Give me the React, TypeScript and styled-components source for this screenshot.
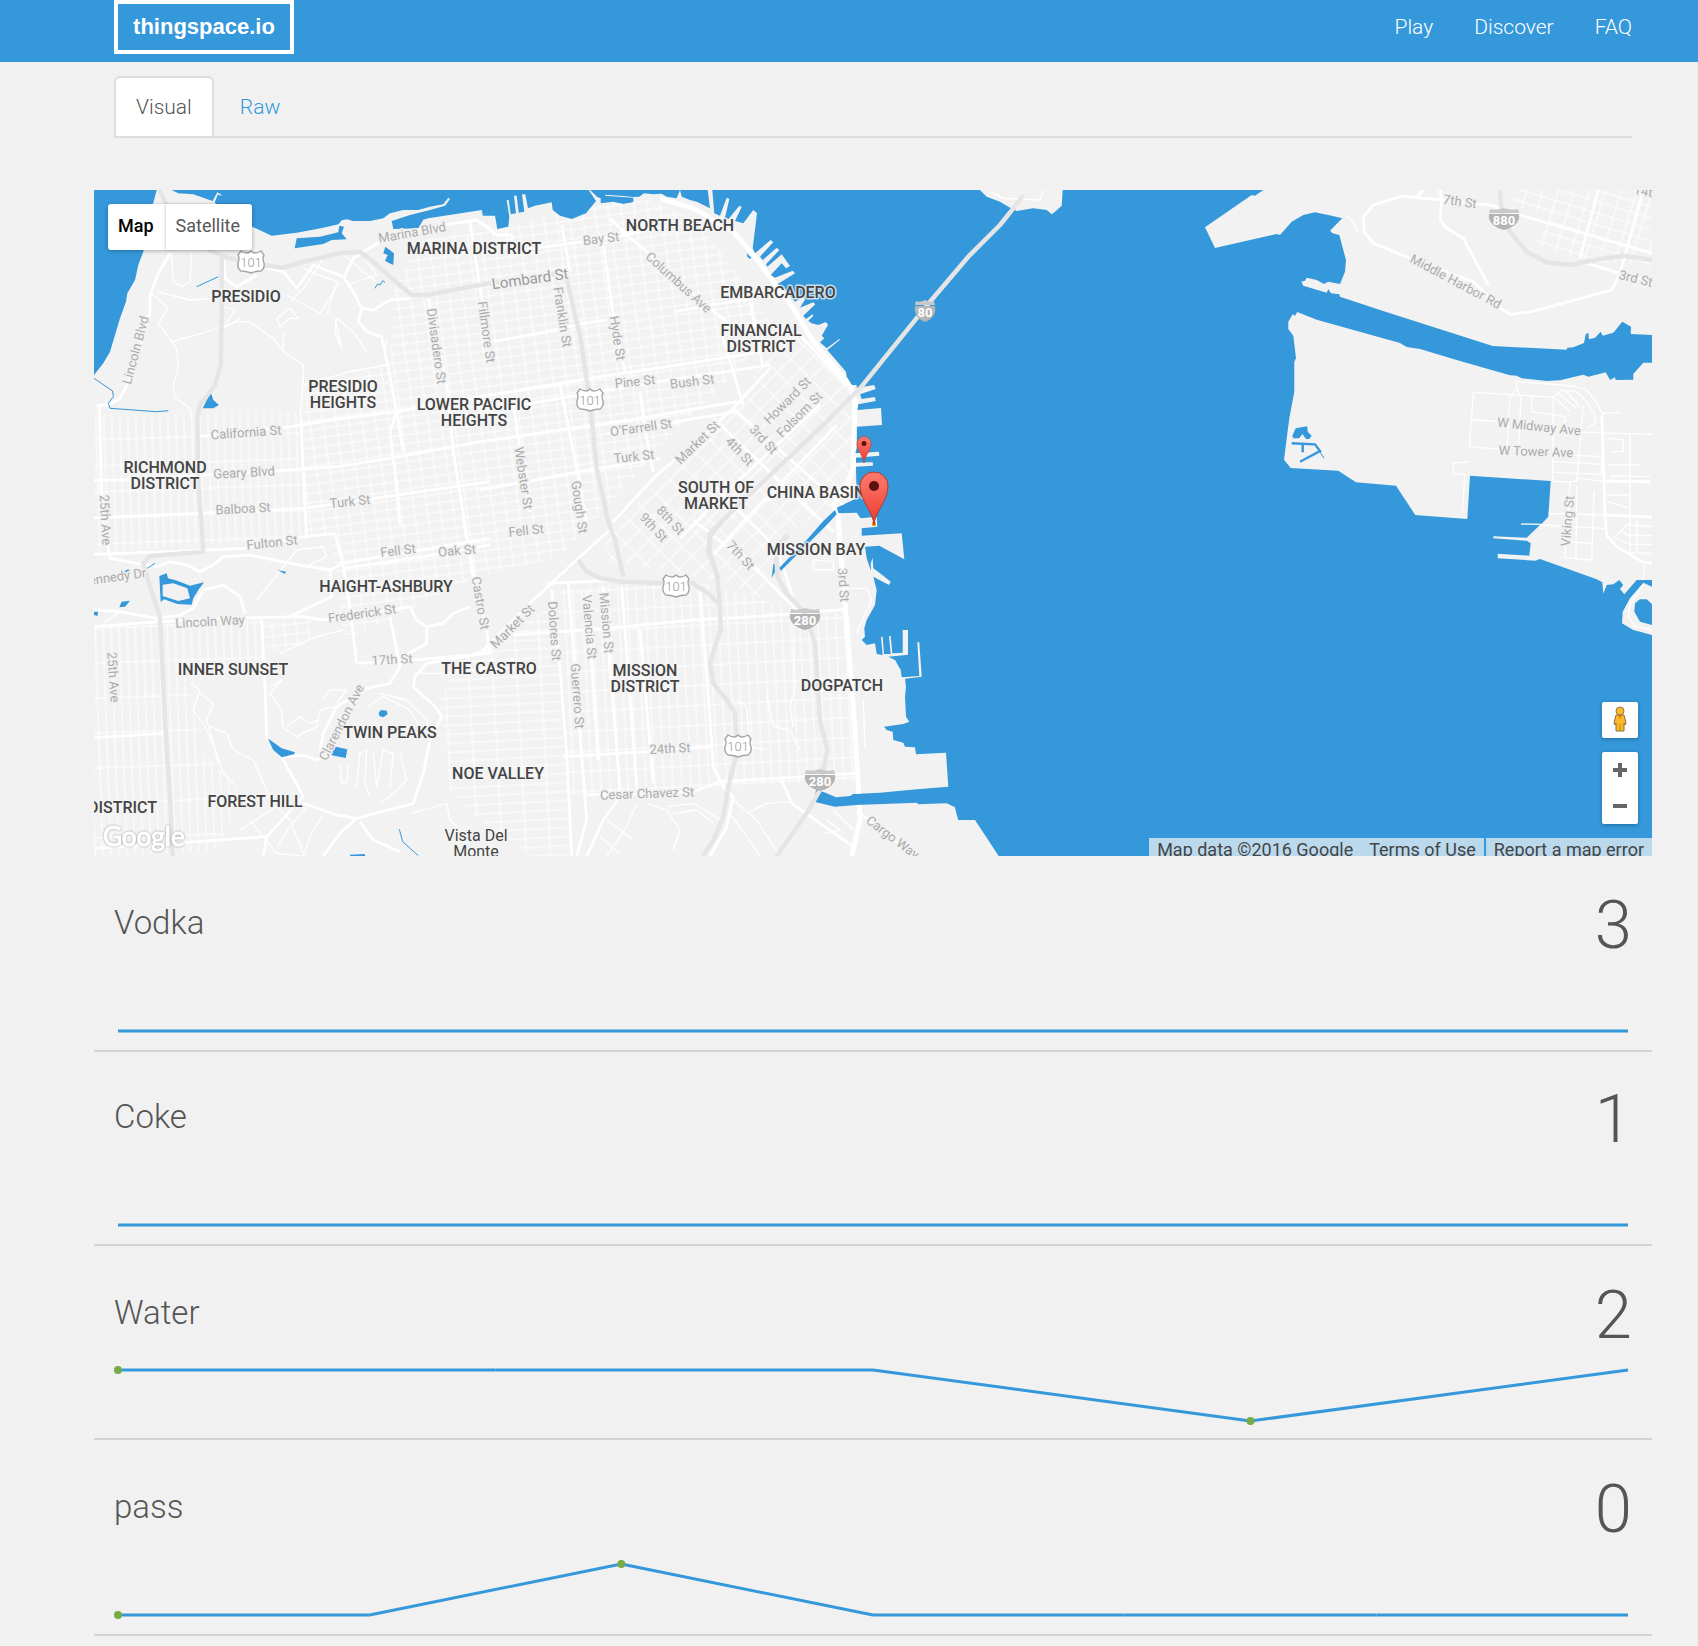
import React, { useState } from "react";
import styled, { createGlobalStyle, css } from "styled-components";

const BLUE = "#3498db";
const LAND = "#f2f2f2";
const SANS = 'Roboto, "Noto Sans", sans-serif';

const GlobalStyle = createGlobalStyle`
  * { box-sizing: border-box; }
  body { margin: 0; background: #f1f1f1; color: #555; font-family: ${SANS}; font-weight: 300; font-size: 21px; }
`;

/* ---------- page frame ---------- */

const Header = styled.header`
  display: flex;
  align-items: flex-start;
  justify-content: space-between;
  height: 62px;
  padding: 0 66px 0 114px;
  background: ${BLUE};
`;

const Brand = styled.a`
  display: flex;
  align-items: center;
  justify-content: center;
  width: 180px;
  height: 54px;
  border: 4px solid #fff;
  color: #fff;
  font: bold 22px "Liberation Sans", Arial, sans-serif;
  text-decoration: none;
`;

const Nav = styled.nav`
  display: flex;
  gap: 41px;
`;

const NavLink = styled.a`
  color: #fff;
  line-height: 54px;
  text-decoration: none;
`;

const Main = styled.main`
  padding: 14px 46px 0 94px;
`;

const Tabs = styled.div`
  display: flex;
  gap: 4px;
  margin: 0 20px 52px;
  border-bottom: 2px solid #ddd;
`;

const Tab = styled.button<{ $active: boolean }>`
  height: 62px;
  margin-bottom: -2px;
  padding: 0 20px;
  border: 2px solid transparent;
  border-radius: 6px 6px 0 0;
  background: none;
  color: ${BLUE};
  font: inherit;
  line-height: 30px;
  cursor: pointer;
  ${(p) =>
    p.$active &&
    css`
      background: #fff;
      border-color: #ddd;
      color: #555;
    `}
`;

/* ---------- map ---------- */

const MapFrame = styled.section`
  position: relative;
  height: 666px;
  overflow: hidden;
  background: ${BLUE};
`;

const MapCanvas = styled.svg`
  display: block;
  width: 100%;
  height: 100%;
  font-family: ${SANS};
`;

const District = styled.text<{ $soft?: boolean }>`
  font-size: 16px;
  font-weight: ${(p) => (p.$soft ? 400 : 500)};
  fill: #444;
  stroke: #f5f5f5;
  stroke-width: 3px;
  stroke-opacity: 0.75;
  stroke-linejoin: round;
  paint-order: stroke;
`;

const Street = styled.text<{ $major?: boolean }>`
  font-size: ${(p) => (p.$major ? 15 : 13)}px;
  font-weight: 400;
  fill: ${(p) => (p.$major ? "#9a9a9a" : "#acacac")};
  stroke: ${LAND};
  stroke-width: 3px;
  stroke-linejoin: round;
  paint-order: stroke;
`;

const ShieldText = styled.text`
  font-size: 13px;
  text-anchor: middle;
`;

const Watermark = styled.text`
  font: 400 26px Lato, sans-serif;
  fill: #fff;
  stroke: #fff;
  stroke-width: 1px;
  filter: drop-shadow(0 0 1px #999);
`;

const TypeSwitch = styled.div`
  position: absolute;
  top: 14px;
  left: 14px;
  display: flex;
  height: 46px;
  border-radius: 3px;
  background: #fff;
  box-shadow: 0 1px 4px rgba(0, 0, 0, 0.3);
`;

const TypeButton = styled.button<{ $active: boolean }>`
  padding: 0 12px 3px 10px;
  border: 0;
  background: none;
  color: ${(p) => (p.$active ? "#000" : "#565656")};
  font: ${(p) => (p.$active ? 500 : 400)} 18px ${SANS};
  cursor: pointer;
  & + & { box-shadow: -1px 0 2px rgba(0, 0, 0, 0.15); }
`;

const SideControls = styled.div`
  position: absolute;
  right: 14px;
  bottom: 32px;
  display: flex;
  flex-direction: column;
  gap: 14px;
`;

const ControlGroup = styled.div`
  display: flex;
  flex-direction: column;
  border-radius: 2px;
  background: #fff;
  box-shadow: 0 1px 4px rgba(0, 0, 0, 0.3);
`;

const ControlButton = styled.button`
  display: grid;
  place-items: center;
  width: 36px;
  height: 36px;
  padding: 0;
  border: 0;
  background: none;
  cursor: pointer;
`;

const Attribution = styled.div`
  position: absolute;
  right: 0;
  bottom: 0;
  display: flex;
  gap: 2px;
  height: 18px;
  overflow: hidden;
`;

const AttributionItem = styled.div`
  display: flex;
  gap: 16px;
  padding: 0 8px;
  background: rgba(245, 245, 245, 0.7);
  color: #444;
  font-size: 18px;
  font-weight: 400;
  line-height: 24px;
  white-space: nowrap;
  a { color: inherit; text-decoration: none; }
`;

type Pt = [number, number];

/* Survey sheets: each is drawn at three units per map unit from its own origin. */
const sheet = (ox: number, oy: number) => (list: string): Pt[] =>
  list
    .trim()
    .split(/\s+/)
    .map((p) => {
      const [x, y] = p.split(",").map(Number);
      return [Math.round((ox + x / 3) * 10) / 10, Math.round((oy + y / 3) * 10) / 10];
    });

const NW = sheet(90, 185);
const N = sheet(480, 185);
const NE = sheet(680, 185);
const SW = sheet(90, 520);
const S = sheet(480, 520);
const E = sheet(1140, 185);
const str = (p: Pt[]) => p.map((q) => q.join(",")).join(" ");

const city = [
  ...NW("12,570 40,535 60,500 75,450 90,400 108,350 112,325 135,285 145,240 160,200 175,130 188,60 200,15 245,15 265,25 310,28 350,42 368,48 382,22 395,30 390,32 384,28 374,52 400,85 440,110 487,125 545,152 620,143 700,128 745,118 755,106 770,103 790,108 840,108 880,100 900,85 940,75 985,75 1020,65 1060,58 1075,38 1080,42 1065,62 1020,75 960,90 905,108 910,132 985,130 1000,104 1015,100 1175,75 1180,94"),
  ...N("0,75 8,92 45,92 52,132 85,125 88,95 80,45 86,45 92,88 108,85 102,32 110,32 116,83 133,80 126,28 136,28 144,70 165,62 215,52 218,75 240,92 275,102 318,85 348,48 326,15 330,15 352,36 362,40 362,55 400,50 430,57 460,52 460,38 425,36 375,32 376,29 420,32 460,36 478,35 492,25 520,28 545,26 560,35 590,40 600,15 605,35 630,45 650,50 690,70 683,15 697,15 703,85 720,92 740,38 748,42 735,98 745,103 778,62 785,66 765,108 790,115 820,75"),
  ...NE("231,85 218,190 225,205 272,165 280,172 240,215 248,225 290,188 298,195 258,238 262,245 305,208 330,243 318,250 305,235 272,270 285,278 338,257 345,265 292,298 312,310 340,345 345,350 370,335 376,342 360,368 400,352 406,358 370,392 378,402 398,388 400,392 385,408 395,415 415,420 438,411 444,420 425,452 433,460 420,472 440,490 478,462 480,464 442,495 498,560 500,575 515,600 530,600 530,608 583,600 587,612 540,628 545,642 585,636 587,648 535,658 532,675 603,669 606,720 530,725 530,790 525,805 597,800 598,812 528,818 528,833 578,832 579,842 528,845 530,940 470,968 475,985 530,983 542,1000 590,995 592,1025 545,1030 545,1052 665,1045 673,1123 598,1082 555,1085 560,1120 573,1158 572,1135 578,1118 580,1150 600,1165 632,1190 627,1200 580,1175 590,1215 585,1260 560,1305 553,1330 555,1355"),
  ...S("1145,360 1160,375 1185,370 1190,402 1208,405 1203,350 1208,350 1212,402 1232,402 1227,348 1232,348 1237,400 1268,398 1268,330 1284,330 1284,404 1225,410 1245,420 1262,450 1265,472 1318,468 1312,367 1318,367 1325,470 1275,476 1278,500 1275,530 1278,590 1288,605 1270,612 1212,620 1220,630 1238,635 1240,660 1270,668 1275,680 1305,682 1308,703 1398,698 1405,800 1310,808 1200,818 1120,822 1110,828 1068,832 1040,820 1020,812 1008,810 1002,845 1065,860 1130,855 1310,848 1315,853 1400,850 1425,862 1428,876 1435,900 1485,900 1556,1008"),
  [94, 856] as Pt,
];

const land: Pt[][] = [
  city,
  NE("900,15 920,35 960,50 985,65 1010,78 1060,70 1100,75 1115,88 1125,80 1145,62 1148,15"),
  E("370,15 345,32 335,30 195,127 225,189 410,147 420,150 455,110 490,90 525,82 575,92 607,100 570,137 578,145 598,150 618,225 615,260 600,297 565,290 552,297 530,285 500,278 495,287 484,290 490,302 560,323 565,312 573,325 598,328 600,335 720,375 1058,483 1280,494 1282,488 1300,487 1332,474 1337,448 1345,443 1347,463 1365,458 1382,440 1388,452 1420,443 1447,410 1473,425 1472,447 1536,450 1536,15"),
  E("472,381 530,404 780,474 800,486 840,492 960,528 1110,571 1130,572 1145,580 1220,588 1260,586 1330,569 1345,575 1375,568 1397,562 1410,585 1425,577 1427,585 1480,584 1480,567 1510,533 1536,533 1536,1185 1490,1185 1453,1228 1440,1212 1450,1200 1438,1185 1420,1198 1400,1200 1390,1226 1387,1192 1370,1183 1200,1122 1185,1127 1073,1120 1073,1106 1168,1112 1172,1075 1160,1067 1060,1060 1060,1054 1160,1058 1200,1020 1143,1019 1143,1015 1205,1016 1225,995 1232,888 990,872 982,1002 826,990 768,902 648,892 595,857 452,849 432,824 448,700 463,620 463,530 468,520 460,452 445,432 445,410 458,388 465,392"),
  E("1510,1193 1470,1240 1448,1280 1446,1315 1480,1335 1536,1350 1536,1320 1500,1310 1483,1280 1485,1255 1500,1243 1520,1243 1536,1258 1536,1205"),
];

const ponds: Pt[][] = [
  NW("620,160 690,155 745,142 748,122 762,125 755,145 770,163 725,165 700,177 614,190"),
  NW("338,670 362,622 370,645 387,660 370,670"),
  NW("886,185 912,205 910,240 885,228 893,210 880,205"),
  NE("465,975 470,988 435,1025 380,1080 302,1158 298,1148 380,1065 430,1008"),
  NE("275,1178 280,1138 288,1134 288,1155"),
  NE("200,205 214,218 210,222 202,215"),
  SW("88,262 95,245 120,242 105,260"),
  SW("90,160 115,148 122,158 105,170"),
  SW("12,275 25,275 22,288 12,285"),
  SW("563,150 588,155 585,162"),
  SW("533,655 575,685 615,697 612,703 575,712 550,690"),
  SW("727,678 772,688 767,714 722,705"),
  SW("866,578 873,570 890,572 893,582 880,592 868,588"),
  SW("780,1004 825,1002 825,1008 780,1008"),
  E("457,752 467,730 502,724 503,740 515,752 508,762 498,762 487,747 478,760 460,760"),
];

const creeks: Pt[][] = [
  NW("320,305 385,275"),
  NW("12,580 68,618 70,635 55,655 60,670 200,680 235,677"),
  NW("855,310 862,298 870,300 878,287 885,292"),
  SW("172,145 195,130"),
  SW("928,928 938,965 985,1007"),
  E("525,778 552,820"),
];

const docks: Pt[][] = [E("455,775 525,778 540,798 480,830"), E("488,780 488,802")];

const freeways: Pt[][] = [
  [...NW("208,15 230,60 300,160 370,200 400,215 520,240 580,248 640,230 750,205 810,200 850,230 900,275 965,330 1010,330 1200,295"), ...N("255,263 300,450 330,650 350,850 385,1010"), ...S("405,60 430,170")],
  [...NW("395,215 395,400 392,540 375,600 330,660 322,700 325,900 335,1020"), ...SW("340,95 180,108 160,130 180,200 210,290 225,600 240,830 248,1008")],
  S("295,120 320,155 360,175 430,185 550,190 640,190 690,225 715,250"),
  S("730,0 690,50 690,100 710,160 718,230 722,330 705,380 690,430 700,490 740,540 765,580 770,700 745,800 730,890 700,960 670,1008"),
  NE("1030,30 1000,70 960,120 865,215 750,350 540,610 430,720 160,975 90,1045 85,1100 115,1180"),
  S("925,45 888,80 892,170 920,220 975,280 1005,370 1020,600 1042,690 1020,810 980,880 890,1008"),
  E("1080,15 1085,80 1110,140 1160,200 1220,232 1290,240 1380,222 1450,212 1536,225"),
];

const avenues: Pt[][] = [
  NW("240,205 205,265 180,330 180,380 130,560 90,640 55,660 20,662"),
  NW("28,665 35,930 42,1035"),
  [...NW("12,886 100,885 350,870 560,858 740,845 900,820 1170,770"), ...N("240,735 480,700 770,650")],
  NW("330,755 600,725 760,700 920,680 1200,630"),
  NW("12,998 220,990 640,970 850,940 1200,890"),
  NW("633,700 640,870 650,1060"),
  NW("580,260 620,310 670,240 760,275 790,320 815,370 805,410 830,440 875,455 895,550 920,680 940,800"),
  NW("760,280 790,220 870,170 1000,130 1160,105 1200,130"),
  NW("815,370 850,375 900,345 960,340"),
  NW("400,215 405,280 440,305 500,270"),
  NW("530,250 580,260"),
  NW("1015,340 1070,600 1090,800 1125,1020 1150,1180"),
  NW("1140,110 1170,310 1200,480"),
  NW("920,680 900,740 915,860 930,1020"),
  N("0,112 50,150 95,150 100,190"),
  N("100,198 310,170 430,150 560,125"),
  N("245,120 270,260"),
  N("370,180 400,390 435,560"),
  N("480,620 500,760 520,860"),
  N("100,660 150,980"),
  N("240,600 290,850 320,1020"),
  N("390,100 440,150 500,200 690,370 740,410"),
  N("40,470 200,440 310,415 380,405"),
  N("585,380 700,358 830,340"),
  N("0,635 300,585 560,545 850,500"),
  N("0,680 240,640 600,580 870,540"),
  N("0,915 300,860 540,820"),
  N("380,745 770,680"),
  N("870,550 760,670 650,770 530,870 400,1010"),
  N("760,670 960,850 1090,960"),
  N("700,700 900,890 1060,1040"),
  N("720,430 790,660"),
  N("810,350 850,550"),
  N("950,440 1100,600"),
  NE("470,720 200,1000 100,1110"),
  NE("420,660 150,910 0,1060"),
  NE("100,900 290,1090 340,1240"),
  SW("45,30 60,115 140,130 200,140 240,125 290,135 330,155 370,135 400,110 480,105 600,130 720,150 725,230 640,270 600,290"),
  SW("12,103 180,97 460,85 640,50 735,40"),
  SW("735,40 760,135 780,260 800,430"),
  SW("720,150 760,130 900,105 1200,55"),
  SW("760,145 1000,110 1200,75"),
  SW("12,320 210,305 480,293 640,290 700,300 960,260"),
  SW("12,270 90,275 200,295 270,285 310,265 340,210 400,195 450,230 465,280"),
  SW("515,300 525,500 530,650 575,710 640,830 530,950 520,1008"),
  SW("575,712 640,705 680,720 725,705"),
  SW("640,850 740,885 800,895 970,850 1000,760 1020,660 1055,590 1040,565 970,500 975,470 1010,430 1150,405 1190,390"),
  SW("800,895 750,940 700,1008"),
  SW("810,905 850,960 930,995"),
  SW("690,700 700,640 740,560 830,505 900,490 930,440 900,290"),
  SW("960,260 980,300 1010,320 1010,370 940,410"),
  SW("1015,320 1060,310 1090,280 1140,260"),
  SW("800,430 970,420 1200,400"),
  SW("12,653 220,640"),
  SW("12,985 250,970 530,950"),
  SW("1120,0 1150,160 1190,330 1200,400"),
  S("0,400 160,240 300,110 400,20"),
  S("100,345 380,325 640,300 820,290 1095,268"),
  S("215,210 240,450 260,700 275,1008"),
  S("265,190 300,640 320,900 290,1008"),
  S("320,215 355,720"),
  S("370,200 400,560 420,810"),
  S("425,200 470,800"),
  S("480,330 520,790"),
  S("660,200 690,600 700,740 730,800 760,830 740,920 690,1008"),
  S("200,190 420,180"),
  S("250,710 500,695 690,680"),
  S("310,825 640,815 720,785 1130,760"),
  S("640,0 830,150 960,280"),
  S("905,780 935,850 1120,980"),
  S("1140,880 1180,910 1300,1008"),
  S("420,830 370,900 320,1008"),
  E("850,15 830,35"),
  E("905,45 785,33 700,60 670,95 672,140 700,175 810,220 1000,290 1085,372 1110,388 1175,380 1415,315 1440,265 1510,15"),
  E("900,15 905,45 900,105 920,130 970,160 1045,300"),
  E("905,45 1060,62 1140,90 1536,205"),
  E("1320,220 1375,15"),
  E("1340,235 1440,265 1536,290"),
  E("1390,888 1530,890"),
  E("1385,690 1392,880 1395,990 1400,1050 1430,1085 1510,1132 1536,1134"),
  E("1395,990 1536,996"),
];

const embarcadero: Pt[] = [
  ...N("540,40 640,70 760,140 820,210 940,370 1000,470 1110,600 1125,650 1120,850 1100,900 1060,960 1075,990"),
  ...S("1075,0 1095,250 1120,560 1135,800 1140,900 1115,1008"),
];

const lanes: Pt[][] = [
  NW("245,205 250,290 275,305 300,290 305,205"),
  NW("185,325 235,370 205,415 245,470 260,490 265,545 250,600 255,640 300,670 305,700"),
  NW("245,470 320,450 440,410 480,410 520,440 550,460 580,500 640,540 640,600"),
  NW("200,320 300,345 380,340"),
  NW("385,360 435,375 400,430 450,400"),
  NW("560,400 600,370 625,400 600,400 570,425 560,400"),
  NW("580,445 580,500"),
  NW("590,330 690,385 750,290"),
  NW("640,250 740,290 710,390"),
  NW("735,400 755,490 735,440 740,400 790,440 830,500"),
  NW("640,600 780,560 890,540"),
  NW("890,460 885,510"),
  NW("760,210 820,260 860,290"),
  NW("700,220 640,310 600,350"),
  NW("770,300 860,270 830,230"),
  NW("640,580 630,700"),
  SW("540,500 575,480 540,520 575,570 580,625 620,650 680,620 690,570 740,560"),
  SW("590,620 630,590 660,610 685,600"),
  SW("300,490 330,510 310,570 345,620 380,700 400,760 430,790"),
  SW("360,620 410,640 430,690 490,720 520,790 550,850"),
  SW("330,520 370,550 350,600 365,650 385,730"),
  SW("700,540 720,510 770,510 740,550"),
  SW("830,560 880,530 960,570 1000,640"),
  SW("870,520 950,540 1010,600 1020,650"),
  SW("800,800 810,700 830,690 825,790 840,830"),
  SW("850,700 860,800 880,690 910,700 900,800"),
  SW("750,730 755,790 770,790 775,730"),
  SW("930,700 950,780 900,830 870,850"),
  SW("570,400 680,350 760,330"),
  SW("500,240 620,90 700,80 710,110 650,140"),
  SW("980,460 1100,460 1190,440"),
  SW("960,880 1000,870 1070,850 1080,900 1110,930"),
  SW("480,900 560,1000 640,1008"),
  SW("450,930 560,860 600,900 640,1000"),
  SW("650,860 600,920 560,980"),
  SW("700,880 660,950 640,1008"),
  SW("40,310 90,275"),
  S("560,860 640,850 690,880 720,900"),
  S("580,880 650,870 700,910"),
  S("470,850 440,920 380,1008"),
  S("500,850 560,870 600,930 580,990"),
  S("380,900 460,960"),
  S("360,950 420,1000"),
  S("760,840 830,900 900,1008"),
  S("800,880 860,850 930,845"),
  S("750,880 800,950 840,1008"),
  S("770,540 800,560 810,680 860,690"),
  S("860,520 880,620 930,630 960,690"),
  S("940,300 945,500 930,560 940,620"),
  S("1150,540 1155,680"),
  S("1000,120 1060,125 1060,150 1000,150 1000,120"),
  S("1095,205 1160,205 1175,240 1130,340"),
  S("1040,900 1080,930 1030,940"),
  S("1060,870 1120,930"),
  NE("930,20 970,40 1080,45 1090,15"),
  E("1130,590 1300,603 1340,615 1365,645 1390,690"),
  E("1445,683 1385,685"),
  E("1000,622 1240,637 1238,890"),
  E("1000,622 988,785 1090,793"),
  E("995,705 1090,710"),
  E("1130,590 1130,610 1110,635 1102,780"),
  E("1130,610 1143,640 1136,780"),
  E("1240,637 1265,615 1310,620 1345,655 1365,690 1365,715 1340,730"),
  E("1245,640 1290,680"),
  E("1255,625 1310,670"),
  E("1275,615 1320,665"),
  E("1330,660 1310,890"),
  E("1175,635 1175,680 1275,695 1275,720"),
  E("1270,740 1536,748"),
  E("1290,810 1385,815 1385,870"),
  E("1240,830 1385,838"),
  E("1240,862 1390,868"),
  E("1238,890 1300,890 1320,880 1392,890"),
  E("1290,890 1275,1118 1355,1125 1362,915"),
  E("1225,985 1395,990"),
  E("1200,1020 1395,1030"),
  E("1280,1070 1355,1075"),
  E("1310,900 1308,1120"),
  E("1405,760 1450,765 1450,800 1410,800"),
  E("1405,840 1500,840"),
  E("1410,873 1530,875"),
  E("1470,750 1470,1100"),
  E("1400,930 1470,930"),
  E("1400,950 1470,970"),
  E("1420,1060 1460,1020 1536,1024"),
  E("1445,1035 1460,1050 1536,1052"),
  E("1430,1060 1470,1078 1536,1078"),
  E("1465,1103 1536,1105"),
  E("1490,1000 1490,1100"),
  E("1512,1135 1510,1193"),
  E("1510,1200 1468,1262 1465,1295 1485,1325 1536,1335"),
  E("940,865 940,835 985,830"),
  E("940,865 975,868 967,985"),
  E("622,92 640,115 655,145"),
];

interface Grid {
  id: string;
  w: number;
  h: number;
  angle: number;
  area: string;
}

const grids: Grid[] = [
  { id: "richmond", w: 8, h: 26, angle: -2, area: "94,415 300,412 306,537 94,553" },
  { id: "pacific", w: 13, h: 9, angle: -8, area: "395,288 420,240 480,232 600,205 650,200 700,222 770,322 738,372 690,415 595,520 560,556 470,580 345,640 330,535 304,532 302,395 390,362" },
  { id: "soma", w: 19, h: 14, angle: -45, area: "790,325 850,385 852,470 830,505 780,540 760,600 720,580 690,575 600,560 610,530 735,405" },
  { id: "mission", w: 9, h: 20, angle: -3, area: "560,590 690,580 800,610 850,612 855,780 570,795" },
  { id: "castro", w: 24, h: 9, angle: -3, area: "460,660 560,600 570,856 530,856 480,820 450,790 440,700" },
  { id: "sunset", w: 8, h: 35, angle: -2, area: "94,628 262,619 264,660 190,685 200,750 240,790 220,850 94,856" },
  { id: "haight", w: 12, h: 10, angle: -6, area: "262,622 312,618 312,640 262,655" },
  { id: "oakland", w: 15, h: 11, angle: 17, area: "1515,190 1652,190 1652,265 1590,262 1535,245 1550,215 1510,205" },
];

interface Label {
  t: string;
  x: number;
  y: number;
  r?: number;
  end?: boolean;
  big?: boolean;
}

const streets: Label[] = [
  { t: "Marina Blvd", x: 412, y: 232, r: -10 },
  { t: "Lincoln Blvd", x: 135, y: 350, r: -75 },
  { t: "California St", x: 246, y: 432, r: -4 },
  { t: "Geary Blvd", x: 244, y: 472, r: -3 },
  { t: "Balboa St", x: 243, y: 508, r: -3 },
  { t: "Turk St", x: 350, y: 501, r: -6 },
  { t: "25th Ave", x: 106, y: 520, r: 87 },
  { t: "Divisadero St", x: 437, y: 346, r: 82 },
  { t: "Fillmore St", x: 487, y: 332, r: 82 },
  { t: "Lombard St", x: 530, y: 279, r: -8, big: true },
  { t: "Bay St", x: 601, y: 238, r: -7 },
  { t: "Columbus Ave", x: 679, y: 282, r: 42 },
  { t: "Franklin St", x: 563, y: 317, r: 81 },
  { t: "Hyde St", x: 618, y: 338, r: 81 },
  { t: "Pine St", x: 635, y: 381, r: -6 },
  { t: "Bush St", x: 692, y: 381, r: -7 },
  { t: "O'Farrell St", x: 641, y: 427, r: -8 },
  { t: "Turk St", x: 634, y: 456, r: -6 },
  { t: "Market St", x: 697, y: 442, r: -44 },
  { t: "4th St", x: 740, y: 451, r: 47 },
  { t: "3rd St", x: 764, y: 439, r: 47 },
  { t: "Howard St", x: 787, y: 400, r: -45 },
  { t: "Folsom St", x: 799, y: 414, r: -45 },
  { t: "Webster St", x: 524, y: 478, r: 81 },
  { t: "Gough St", x: 580, y: 507, r: 82 },
  { t: "8th St", x: 671, y: 520, r: 47 },
  { t: "9th St", x: 654, y: 527, r: 47 },
  { t: "7th St", x: 741, y: 555, r: 47 },
  { t: "Fulton St", x: 272, y: 542, r: -6 },
  { t: "Fell St", x: 398, y: 550, r: -7 },
  { t: "Fell St", x: 526, y: 530, r: -6 },
  { t: "Oak St", x: 457, y: 550, r: -5 },
  { t: "Kennedy Dr", x: 146, y: 572, r: -8, end: true },
  { t: "Lincoln Way", x: 210, y: 621, r: -3 },
  { t: "Frederick St", x: 362, y: 613, r: -8 },
  { t: "17th St", x: 392, y: 659, r: -3 },
  { t: "Castro St", x: 481, y: 603, r: 80 },
  { t: "Clarendon Ave", x: 341, y: 722, r: -63 },
  { t: "25th Ave", x: 114, y: 677, r: 86 },
  { t: "Market St", x: 512, y: 626, r: -45 },
  { t: "Dolores St", x: 555, y: 631, r: 86 },
  { t: "Valencia St", x: 590, y: 627, r: 85 },
  { t: "Mission St", x: 607, y: 623, r: 85 },
  { t: "Guerrero St", x: 578, y: 696, r: 86 },
  { t: "24th St", x: 670, y: 748, r: -3 },
  { t: "Cesar Chavez St", x: 647, y: 793, r: -2 },
  { t: "3rd St", x: 844, y: 585, r: 86 },
  { t: "Cargo Way", x: 893, y: 837, r: 37 },
  { t: "7th St", x: 1460, y: 201, r: 8 },
  { t: "Middle Harbor Rd", x: 1456, y: 281, r: 28 },
  { t: "3rd St", x: 1636, y: 278, r: 14 },
  { t: "14th", x: 1647, y: 191, r: 10 },
  { t: "W Midway Ave", x: 1539, y: 426, r: 6 },
  { t: "W Tower Ave", x: 1536, y: 451, r: 2 },
  { t: "Viking St", x: 1567, y: 521, r: -85 },
];

const districts: Label[] = [
  { t: "MARINA DISTRICT", x: 474, y: 248 },
  { t: "PRESIDIO", x: 246, y: 296 },
  { t: "NORTH BEACH", x: 680, y: 225 },
  { t: "EMBARCADERO", x: 778, y: 292 },
  { t: "FINANCIAL", x: 761, y: 330 },
  { t: "DISTRICT", x: 761, y: 346 },
  { t: "PRESIDIO", x: 343, y: 386 },
  { t: "HEIGHTS", x: 343, y: 402 },
  { t: "LOWER PACIFIC", x: 474, y: 404 },
  { t: "HEIGHTS", x: 474, y: 420 },
  { t: "RICHMOND", x: 165, y: 467 },
  { t: "DISTRICT", x: 165, y: 483 },
  { t: "SOUTH OF", x: 716, y: 487 },
  { t: "MARKET", x: 716, y: 503 },
  { t: "CHINA BASIN", x: 816, y: 492 },
  { t: "MISSION BAY", x: 816, y: 549 },
  { t: "HAIGHT-ASHBURY", x: 386, y: 586 },
  { t: "INNER SUNSET", x: 233, y: 669 },
  { t: "THE CASTRO", x: 489, y: 668 },
  { t: "MISSION", x: 645, y: 670 },
  { t: "DISTRICT", x: 645, y: 686 },
  { t: "DOGPATCH", x: 842, y: 685 },
  { t: "TWIN PEAKS", x: 390, y: 732 },
  { t: "NOE VALLEY", x: 498, y: 773 },
  { t: "FOREST HILL", x: 255, y: 801 },
  { t: "DISTRICT", x: 157, y: 807, end: true },
  { t: "Vista Del", x: 476, y: 835, big: true },
  { t: "Monte", x: 476, y: 851, big: true },
];

const UsShield = ({ x, y }: { x: number; y: number }) => (
  <g transform={`translate(${x} ${y})`}>
    <path
      d="M-10 -11 Q-7 -9 -4 -9 Q-2 -9 0 -11 Q2 -9 4 -9 Q7 -9 10 -11 L13 -7 Q11 -4 13 1 Q14 6 10 9 Q5 9 0 11 Q-5 9 -10 9 Q-14 6 -13 1 Q-11 -4 -13 -7 Z"
      fill="#fff"
      stroke="#a6a6a6"
      strokeWidth={1.4}
    />
    <ShieldText y={5} fill="#999">101</ShieldText>
  </g>
);

const Interstate = ({ x, y, n }: { x: number; y: number; n: string }) => {
  const w = n.length > 2 ? 15 : 10;
  return (
    <g transform={`translate(${x} ${y})`}>
      <path d={`M${-w + 1} -10 Q${-w / 2} -8 0 -11 Q${w / 2} -8 ${w - 1} -10 L${w} -6 H${-w}Z`} fill="#c9c9c9" />
      <path d={`M${-w} -5 H${w} Q${w + 2} 6 0 11 Q${-w - 2} 6 ${-w} -5Z`} fill="#b4b4b4" />
      <ShieldText y={6} fill="#fff" fontWeight={700}>{n}</ShieldText>
    </g>
  );
};

const Pin = ({ x, y, k = 1 }: { x: number; y: number; k?: number }) => (
  <g transform={`translate(${x} ${y}) scale(${k})`}>
    <path
      d="M0 0 C-1 -14 -14 -24 -14 -39 A14 14 0 0 1 14 -39 C14 -24 1 -14 0 0Z"
      fill="url(#pin)"
      stroke="#b23a30"
    />
    <circle cy={-39} r={5} fill="#5a120d" />
  </g>
);

const lineSet = (set: Pt[][]) => set.map((p, i) => <polyline key={i} points={str(p)} />);

const CityMap = () => (
  <MapCanvas viewBox="94 190 1558 666" preserveAspectRatio="xMidYMid slice" role="img" aria-label="Map of San Francisco">
    <defs>
      <linearGradient id="pin" x1="0" y1="0" x2="0" y2="1">
        <stop offset="0" stopColor="#ff7a6e" />
        <stop offset="1" stopColor="#ea3c2e" />
      </linearGradient>
      <clipPath id="shore">
        {land.map((p, i) => (
          <polygon key={i} points={str(p)} />
        ))}
      </clipPath>
      {grids.map((g) => (
        <pattern key={g.id} id={g.id} width={g.w} height={g.h} patternUnits="userSpaceOnUse" patternTransform={`rotate(${g.angle})`}>
          <path d={`M0 1H${g.w}M1 0V${g.h}`} stroke="#fff" fill="none" />
        </pattern>
      ))}
    </defs>
    <rect x={94} y={190} width={1558} height={666} fill={BLUE} />
    <g fill={LAND}>
      {land.map((p, i) => (
        <polygon key={i} points={str(p)} />
      ))}
    </g>
    <g clipPath="url(#shore)">
      {grids.map((g) => (
        <polygon key={g.id} points={g.area} fill={`url(#${g.id})`} />
      ))}
      <g fill="none" stroke="#fff" strokeLinejoin="round">
        <g strokeWidth={1.3}>{lineSet(lanes)}</g>
        <g strokeWidth={2.8}>{lineSet(avenues)}</g>
        <polyline points={str(embarcadero)} strokeWidth={5} />
      </g>
    </g>
    <g fill={BLUE}>
      {ponds.map((p, i) => (
        <polygon key={i} points={str(p)} />
      ))}
      <path
        transform="translate(90 520) scale(.3333)"
        fillRule="evenodd"
        d="M208 168 L230 160 L234 175 L262 182 L300 197 L342 187 L325 210 L310 235 L305 254 L262 252 L222 238 L212 246Z M218 194 L250 190 L292 205 L300 235 L265 243 L218 228Z"
      />
    </g>
    <g fill="none" stroke={BLUE}>
      {lineSet(creeks)}
      <g strokeWidth={2.4}>{lineSet(docks)}</g>
    </g>
    <g fill="none" stroke="#e5e5e5" strokeWidth={4.5} strokeLinejoin="round">
      {lineSet(freeways)}
    </g>
    {streets.map((s, i) => (
      <Street key={i} $major={s.big} x={s.x} y={s.y + 5} textAnchor={s.end ? "end" : "middle"} transform={`rotate(${s.r} ${s.x} ${s.y})`}>
        {s.t}
      </Street>
    ))}
    <UsShield x={251} y={262} />
    <UsShield x={590} y={400} />
    <UsShield x={676} y={586} />
    <UsShield x={738} y={746} />
    <Interstate x={805} y={619} n="280" />
    <Interstate x={820} y={780} n="280" />
    <Interstate x={925} y={311} n="80" />
    <Interstate x={1504} y={219} n="880" />
    {districts.map((d, i) => (
      <District key={i} $soft={d.big} x={d.x} y={d.y + 6} textAnchor={d.end ? "end" : "middle"}>
        {d.t}
      </District>
    ))}
    <Pin x={864} y={463} k={0.5} />
    <rect x={872} y={522} width={4} height={4} fill="#f9a11b" />
    <Pin x={874} y={525} />
    <Watermark x={103} y={846}>Google</Watermark>
  </MapCanvas>
);

const Pegman = () => (
  <svg width="16" height="28" viewBox="0 0 16 28" aria-hidden="true">
    <path d="M4 9 H12 L14 17 L13 19 L12 17 V25 H4 V17 L3 19 L2 17Z" fill="#fbb829" stroke="#8f6f35" />
    <path d="M8 18 V25" stroke="#b98627" />
    <path d="M6 9 H10 L8 13Z" fill="#e4701e" />
    <circle cx="8" cy="5" r="4" fill="#fbb829" stroke="#9a7a45" />
  </svg>
);

/* ---------- readings ---------- */

const ReadingHead = styled.div`
  display: flex;
  justify-content: space-between;
  align-items: flex-start;
  height: 80px;
`;

/* A reading whose value varies gives its heading two more pixels of air. */
const Reading = styled.article<{ $varies: boolean }>`
  display: flex;
  flex-direction: column;
  height: 194px;
  padding: ${(p) => (p.$varies ? 29 : 27)}px 20px 0;
  border-bottom: 2px solid #d3d3d3;
  &:last-child { height: 196px; }
  ${ReadingHead} { height: ${(p) => (p.$varies ? 78 : 80)}px; }
`;

const Readings = styled.section`
  padding-top: 2px;
`;

const Name = styled.h2`
  margin: 0;
  font-size: 33px;
  font-weight: 300;
  line-height: 76px;
`;

const Value = styled.output`
  font-size: 67px;
  font-weight: 300;
  line-height: 80px;
`;

const ChartBox = styled.div`
  flex: 1;
  padding: 0 4px;
`;

const ChartSvg = styled.svg`
  display: block;
  width: 100%;
  height: 80px;
  overflow: visible;
`;

interface Series {
  name: string;
  value: number;
  samples: number[];
  marks: number[];
}

const series: Series[] = [
  { name: "Vodka", value: 3, samples: [3, 3], marks: [] },
  { name: "Coke", value: 1, samples: [1, 1], marks: [] },
  { name: "Water", value: 2, samples: [2, 2, 2, 0, 2], marks: [0, 3] },
  { name: "pass", value: 0, samples: [0, 0, 1, 0, 0, 0, 0], marks: [0, 2] },
];

const Sparkline = ({ name, samples, marks }: Series) => {
  const min = Math.min(...samples);
  const range = Math.max(...samples) - min;
  const px = (i: number) => `${(i / (samples.length - 1)) * 100}%`;
  const py = (v: number) => (range ? 68 - ((v - min) / range) * 51 : 66);
  return (
    <ChartSvg role="img" aria-label={`${name} history`}>
      {samples.slice(1).map((v, i) => (
        <line key={i} x1={px(i)} y1={py(samples[i])} x2={px(i + 1)} y2={py(v)} stroke={BLUE} strokeWidth={3} />
      ))}
      {marks.map((i) => (
        <circle key={i} cx={px(i)} cy={py(samples[i])} r={4} fill="#75ab48" />
      ))}
    </ChartSvg>
  );
};

export default function App() {
  const [tab, setTab] = useState("Visual");
  const [type, setType] = useState("Map");
  return (
    <>
      <GlobalStyle />
      <Header>
        <Brand href="#">thingspace.io</Brand>
        <Nav>
          {["Play", "Discover", "FAQ"].map((l) => (
            <NavLink key={l} href="#">{l}</NavLink>
          ))}
        </Nav>
      </Header>
      <Main>
        <Tabs role="tablist">
          {["Visual", "Raw"].map((t) => (
            <Tab key={t} role="tab" aria-selected={tab === t} $active={tab === t} onClick={() => setTab(t)}>
              {t}
            </Tab>
          ))}
        </Tabs>
        <MapFrame>
          <CityMap />
          <TypeSwitch>
            {["Map", "Satellite"].map((t) => (
              <TypeButton key={t} $active={type === t} onClick={() => setType(t)}>
                {t}
              </TypeButton>
            ))}
          </TypeSwitch>
          <SideControls>
            <ControlGroup>
              <ControlButton aria-label="Street View">
                <Pegman />
              </ControlButton>
            </ControlGroup>
            <ControlGroup>
              <ControlButton aria-label="Zoom in">
                <svg width="14" height="14" aria-hidden="true"><path d="M0 7H14M7 0V14" stroke="#666" strokeWidth="4" /></svg>
              </ControlButton>
              <ControlButton aria-label="Zoom out">
                <svg width="14" height="14" aria-hidden="true"><path d="M0 7H14" stroke="#666" strokeWidth="4" /></svg>
              </ControlButton>
            </ControlGroup>
          </SideControls>
          <Attribution>
            <AttributionItem>
              <span>Map data ©2016 Google</span>
              <a href="#">Terms of Use</a>
            </AttributionItem>
            <AttributionItem>
              <a href="#">Report a map error</a>
            </AttributionItem>
          </Attribution>
        </MapFrame>
        <Readings>
          {series.map((s) => (
            <Reading key={s.name} $varies={s.marks.length > 0}>
              <ReadingHead>
                <Name>{s.name}</Name>
                <Value>{s.value}</Value>
              </ReadingHead>
              <ChartBox>
                <Sparkline {...s} />
              </ChartBox>
            </Reading>
          ))}
        </Readings>
      </Main>
    </>
  );
}
